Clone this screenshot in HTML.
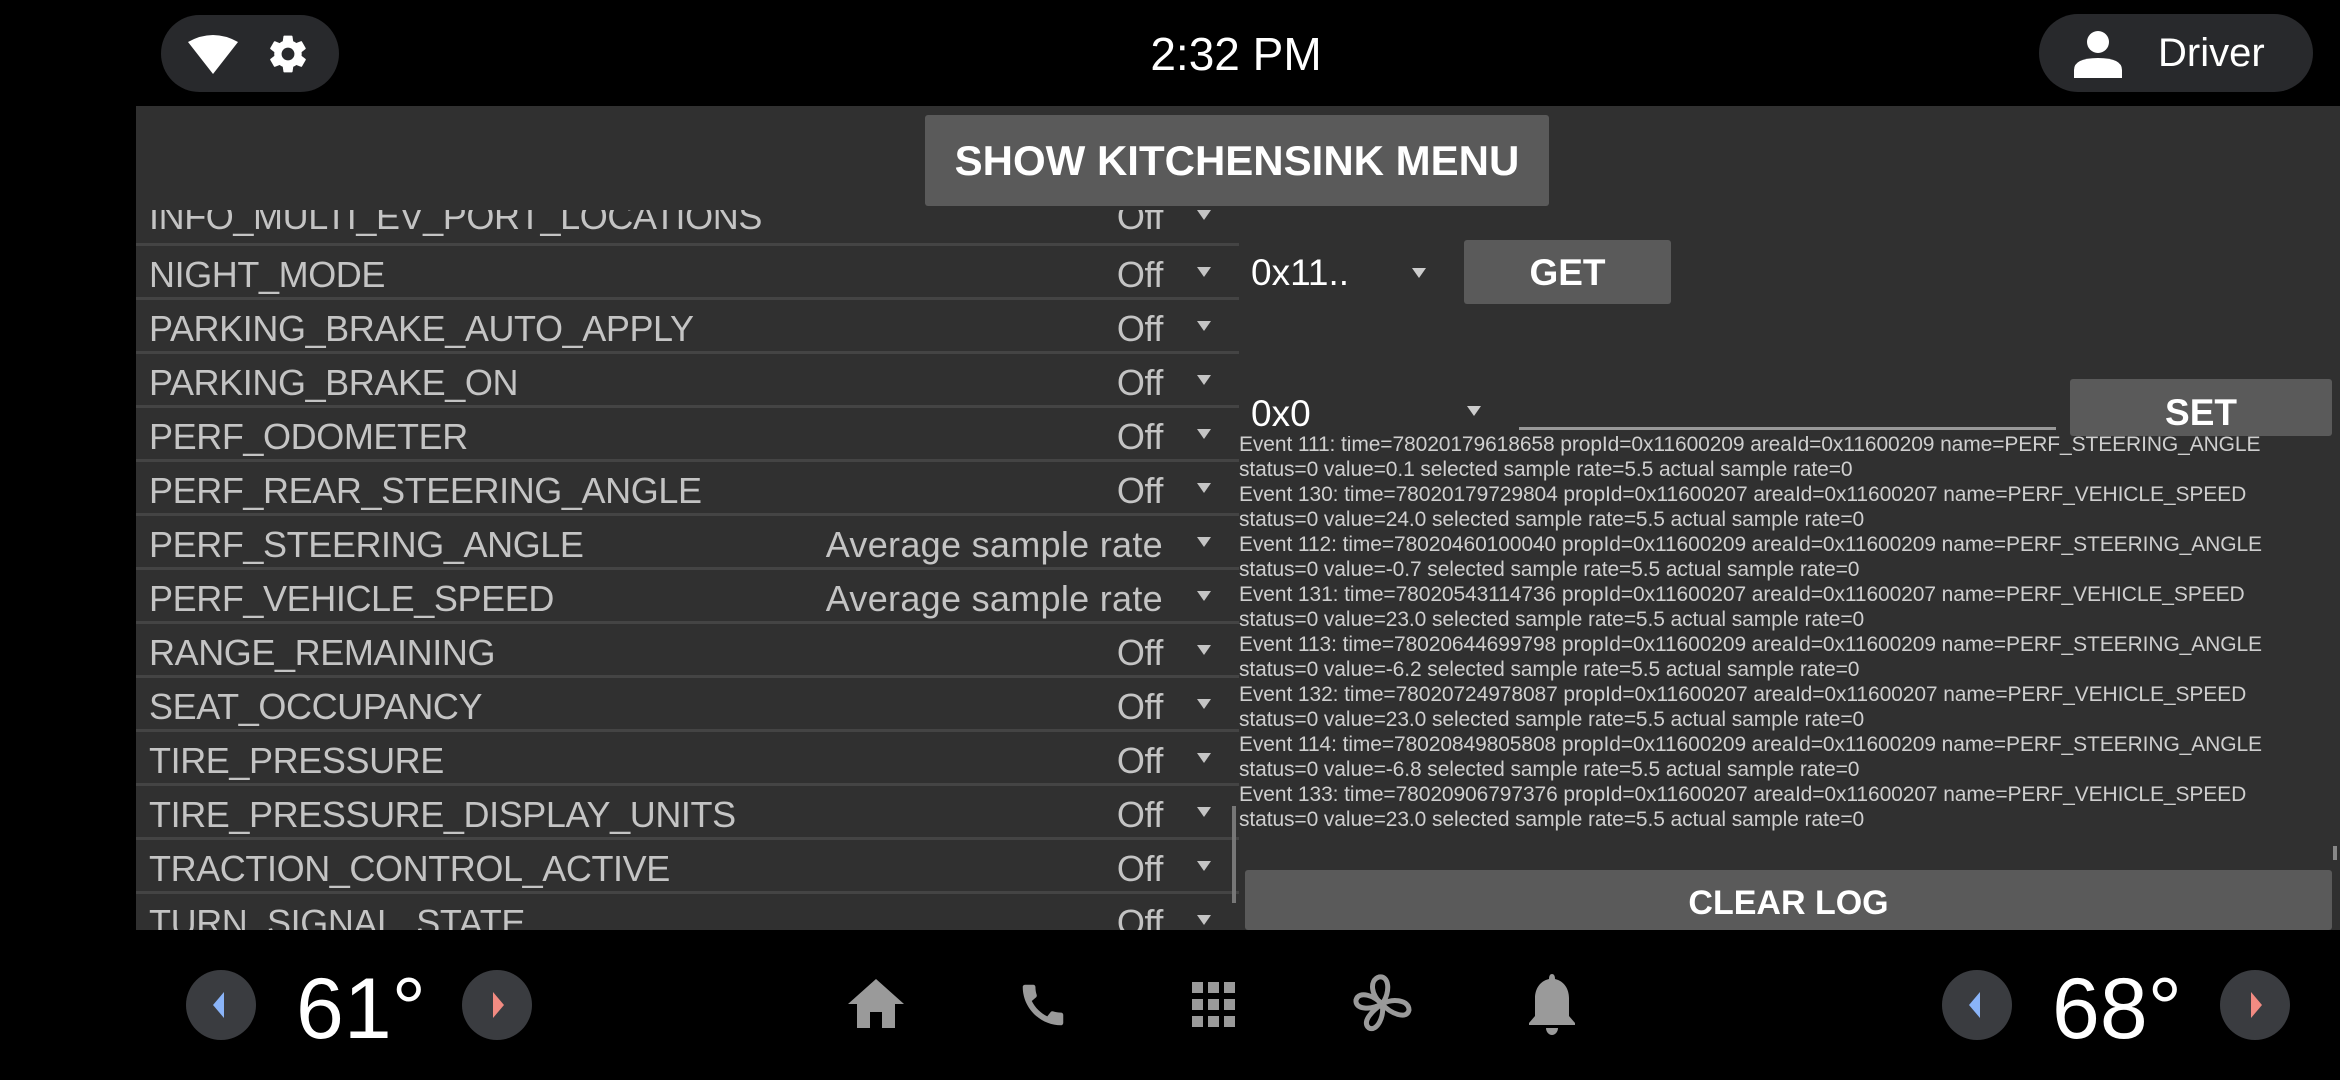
<!DOCTYPE html>
<html><head><meta charset="utf-8"><style>
*{margin:0;padding:0;box-sizing:border-box}
body{width:2340px;height:1080px;background:#000;position:relative;overflow:hidden;font-family:"Liberation Sans",sans-serif}
.abs{position:absolute}
.pill{background:#28292c;border-radius:40px}
#panel{left:136px;top:106px;width:2204px;height:824px;background:#303030;overflow:hidden}
.btn{background:#5a5a5a;color:#fff;font-weight:bold;text-align:center;border-radius:3px}
#list{left:136px;top:210px;width:1103px;height:720px;overflow:hidden}
.row{position:absolute;left:0;width:1103px;height:54px;border-bottom:3px solid #444;color:#c4c4c4;font-size:36px;letter-spacing:-0.4px}
.row .n{position:absolute;left:13px;top:8px}
.row .v{position:absolute;right:76px;top:8px}
.row .a{position:absolute;right:28px;top:21px;width:0;height:0;border-left:7px solid transparent;border-right:7px solid transparent;border-top:10px solid #c4c4c4}
.log{left:1239px;color:#cfcfcf;font-size:21px;letter-spacing:-0.1px;white-space:nowrap;line-height:25px}
.circ{width:70px;height:70px;border-radius:50%;background:#3a3c40}
.temp{color:#fff;font-size:86px;top:960px}
.ic{fill:#9a9a9a}
</style></head><body>
<div class="abs pill" style="left:161px;top:15px;width:178px;height:77px"></div>
<svg class="abs" style="left:186px;top:34px" width="54" height="40" viewBox="0 0 54 40"><path d="M2 8 Q27 -6 52 8 L27 40 Z" fill="#fff"/></svg>
<svg class="abs" style="left:266px;top:32px" width="44" height="44" viewBox="0 0 24 24"><path fill="#fff" d="M19.4 13c.04-.33.06-.66.06-1s-.02-.67-.06-1l2.1-1.650c.19-.15.24-.42.12-.64l-2-3.460c-.12-.22-.39-.3-.61-.22l-2.490 1c-.52-.4-1.080-.73-1.690-.98l-.38-2.650A.49.49 0 0 0 14 2h-4c-.25 0-.46.18-.49.42l-.38 2.650c-.61.25-1.170.59-1.690.98l-2.490-1c-.23-.09-.49 0-.61.22l-2 3.460c-.13.22-.07.49.12.64L4.570 11c-.04.33-.07.67-.07 1s.03.67.07 1l-2.110 1.650c-.19.15-.24.42-.12.64l2 3.460c.12.22.39.3.61.22l2.490-1c.52.4 1.080.73 1.690.98l.38 2.650c.03.24.24.42.49.42h4c.25 0 .46-.18.49-.42l.38-2.650c.61-.25 1.170-.59 1.690-.98l2.490 1c.23.09.49 0 .61-.22l2-3.460c.12-.22.07-.49-.12-.64L19.400 13zM12 15.500a3.500 3.500 0 1 1 0-7 3.500 3.500 0 0 1 0 7z"/></svg>
<div class="abs" style="left:1036px;top:27px;width:400px;text-align:center;color:#fff;font-size:46px">2:32 PM</div>
<div class="abs pill" style="left:2039px;top:14px;width:274px;height:78px"></div>
<svg class="abs" style="left:2072px;top:30px" width="52" height="48" viewBox="0 0 52 48"><circle cx="26" cy="12" r="11" fill="#fff"/><path d="M2 48 V40 Q2 28 26 28 Q50 28 50 40 V48 Z" fill="#fff"/></svg>
<div class="abs" style="left:2158px;top:31px;color:#fff;font-size:40px">Driver</div>

<div id="panel" class="abs"></div>
<div class="abs btn" style="left:925px;top:115px;width:624px;height:91px;font-size:42px;line-height:91px">SHOW KITCHENSINK MENU</div>

<div id="list" class="abs">
<div class="row" style="top:-18px"><span class="n" style="top:4px">INFO_MULTI_EV_PORT_LOCATIONS</span><span class="v" style="top:4px">Off</span><span class="a" style="top:18px"></span></div>
<div class="row" style="top:36px"><span class="n">NIGHT_MODE</span><span class="v">Off</span><span class="a"></span></div>
<div class="row" style="top:90px"><span class="n">PARKING_BRAKE_AUTO_APPLY</span><span class="v">Off</span><span class="a"></span></div>
<div class="row" style="top:144px"><span class="n">PARKING_BRAKE_ON</span><span class="v">Off</span><span class="a"></span></div>
<div class="row" style="top:198px"><span class="n">PERF_ODOMETER</span><span class="v">Off</span><span class="a"></span></div>
<div class="row" style="top:252px"><span class="n">PERF_REAR_STEERING_ANGLE</span><span class="v">Off</span><span class="a"></span></div>
<div class="row" style="top:306px"><span class="n">PERF_STEERING_ANGLE</span><span class="v" style="letter-spacing:0.3px">Average sample rate</span><span class="a"></span></div>
<div class="row" style="top:360px"><span class="n">PERF_VEHICLE_SPEED</span><span class="v" style="letter-spacing:0.3px">Average sample rate</span><span class="a"></span></div>
<div class="row" style="top:414px"><span class="n">RANGE_REMAINING</span><span class="v">Off</span><span class="a"></span></div>
<div class="row" style="top:468px"><span class="n">SEAT_OCCUPANCY</span><span class="v">Off</span><span class="a"></span></div>
<div class="row" style="top:522px"><span class="n">TIRE_PRESSURE</span><span class="v">Off</span><span class="a"></span></div>
<div class="row" style="top:576px"><span class="n">TIRE_PRESSURE_DISPLAY_UNITS</span><span class="v">Off</span><span class="a"></span></div>
<div class="row" style="top:630px"><span class="n">TRACTION_CONTROL_ACTIVE</span><span class="v">Off</span><span class="a"></span></div>
<div class="row" style="top:684px"><span class="n">TURN_SIGNAL_STATE</span><span class="v">Off</span><span class="a"></span></div>
</div>
<div class="abs" style="left:1232px;top:806px;width:4px;height:97px;background:#777"></div>

<div class="abs" style="left:1251px;top:252px;color:#fff;font-size:37px">0x11..</div>
<div class="abs" style="left:1412px;top:268px;border-left:7px solid transparent;border-right:7px solid transparent;border-top:10px solid #ccc"></div>
<div class="abs btn" style="left:1464px;top:240px;width:207px;height:64px;font-size:37px;line-height:66px">GET</div>

<div class="abs" style="left:1251px;top:393px;color:#fff;font-size:37px">0x0</div>
<div class="abs" style="left:1467px;top:406px;border-left:7px solid transparent;border-right:7px solid transparent;border-top:10px solid #ccc"></div>
<div class="abs" style="left:1519px;top:427px;width:537px;height:3px;background:#999"></div>
<div class="abs btn" style="left:2070px;top:379px;width:262px;height:57px;font-size:37px;line-height:68px;overflow:hidden">SET</div>

<div class="abs" style="left:1239px;top:436px;width:1101px;height:400px;overflow:hidden">
<div class="log abs" style="left:0;top:-4px">
Event 111: time=78020179618658 propId=0x11600209 areaId=0x11600209 name=PERF_STEERING_ANGLE<br>
status=0 value=0.1 selected sample rate=5.5 actual sample rate=0<br>
Event 130: time=78020179729804 propId=0x11600207 areaId=0x11600207 name=PERF_VEHICLE_SPEED<br>
status=0 value=24.0 selected sample rate=5.5 actual sample rate=0<br>
Event 112: time=78020460100040 propId=0x11600209 areaId=0x11600209 name=PERF_STEERING_ANGLE<br>
status=0 value=-0.7 selected sample rate=5.5 actual sample rate=0<br>
Event 131: time=78020543114736 propId=0x11600207 areaId=0x11600207 name=PERF_VEHICLE_SPEED<br>
status=0 value=23.0 selected sample rate=5.5 actual sample rate=0<br>
Event 113: time=78020644699798 propId=0x11600209 areaId=0x11600209 name=PERF_STEERING_ANGLE<br>
status=0 value=-6.2 selected sample rate=5.5 actual sample rate=0<br>
Event 132: time=78020724978087 propId=0x11600207 areaId=0x11600207 name=PERF_VEHICLE_SPEED<br>
status=0 value=23.0 selected sample rate=5.5 actual sample rate=0<br>
Event 114: time=78020849805808 propId=0x11600209 areaId=0x11600209 name=PERF_STEERING_ANGLE<br>
status=0 value=-6.8 selected sample rate=5.5 actual sample rate=0<br>
Event 133: time=78020906797376 propId=0x11600207 areaId=0x11600207 name=PERF_VEHICLE_SPEED<br>
status=0 value=23.0 selected sample rate=5.5 actual sample rate=0
</div></div>
<div class="abs" style="left:2333px;top:846px;width:4px;height:14px;background:#888"></div>
<div class="abs btn" style="left:1245px;top:870px;width:1087px;height:60px;font-size:34px;line-height:66px;overflow:hidden">CLEAR LOG</div>

<div class="abs circ" style="left:186px;top:970px"></div>
<div class="abs" style="left:213px;top:992px;border-top:13px solid transparent;border-bottom:13px solid transparent;border-right:11px solid #8ab4f8"></div>
<div class="abs temp" style="left:296px">61°</div>
<div class="abs circ" style="left:462px;top:970px"></div>
<div class="abs" style="left:493px;top:992px;border-top:13px solid transparent;border-bottom:13px solid transparent;border-left:11px solid #f28b82"></div>

<div class="abs circ" style="left:1942px;top:970px"></div>
<div class="abs" style="left:1969px;top:992px;border-top:13px solid transparent;border-bottom:13px solid transparent;border-right:11px solid #8ab4f8"></div>
<div class="abs temp" style="left:2052px">68°</div>
<div class="abs circ" style="left:2220px;top:970px"></div>
<div class="abs" style="left:2251px;top:992px;border-top:13px solid transparent;border-bottom:13px solid transparent;border-left:11px solid #f28b82"></div>

<svg class="abs" style="left:847px;top:979px" width="58" height="50" viewBox="0 0 58 50"><path class="ic" d="M29 0 L57 25 H48 V49 H35 V33 H23 V49 H10 V25 H1 Z"/></svg>
<svg class="abs" style="left:1016px;top:978px" width="54" height="54" viewBox="0 0 24 24"><path class="ic" d="M20.01 15.38c-1.23 0-2.42-.2-3.53-.56a.977.977 0 0 0-1.01.24l-1.57 1.97c-2.83-1.35-5.48-3.9-6.89-6.83l1.95-1.66c.27-.28.35-.67.24-1.02-.37-1.11-.56-2.3-.56-3.53 0-.54-.45-.99-.99-.99H4.19C3.65 3 3 3.24 3 3.99 3 13.28 10.73 21 20.01 21c.71 0 .99-.63.99-1.18v-3.45c0-.54-.45-.99-.99-.99z"/></svg>
<svg class="abs" style="left:1190px;top:981px" width="48" height="48" viewBox="0 0 48 48"><g class="ic"><rect x="2" y="1" width="11" height="11"/><rect x="18" y="1" width="11" height="11"/><rect x="34" y="1" width="11" height="11"/><rect x="2" y="18" width="11" height="11"/><rect x="18" y="18" width="11" height="11"/><rect x="34" y="18" width="11" height="11"/><rect x="2" y="35" width="11" height="11"/><rect x="18" y="35" width="11" height="11"/><rect x="34" y="35" width="11" height="11"/></g></svg>
<svg class="abs" style="left:1351px;top:974px" width="62" height="60" viewBox="0 0 62 60"><g fill="none" stroke="#9a9a9a" stroke-width="5"><path d="M31 30 C20 22 18 6 28 3 C38 1 40 18 31 30 Z"/><path d="M31 30 C42 24 58 26 58 36 C56 46 40 40 31 30 Z"/><path d="M31 30 C34 42 26 58 18 54 C10 48 22 36 31 30 Z"/><path d="M31 30 C20 36 4 36 5 26 C8 16 24 22 31 30 Z"/></g></svg>
<svg class="abs" style="left:1526px;top:974px" width="52" height="62" viewBox="0 0 52 62"><path class="ic" d="M26 0 C28 0 29 2 29 5 C38 7 43 15 43 24 V42 L49 49 V51 H3 V49 L9 42 V24 C9 15 14 7 23 5 C23 2 24 0 26 0 Z M20 54 H32 C32 58 29 61 26 61 C23 61 20 58 20 54 Z"/></svg>
</body></html>
